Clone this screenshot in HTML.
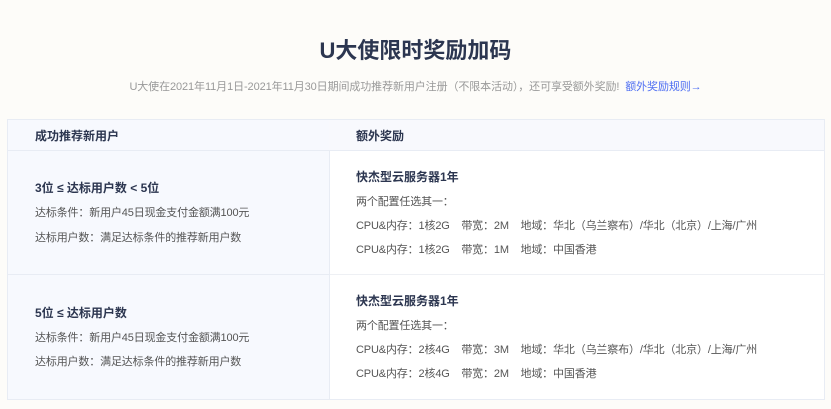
<!DOCTYPE html><html><head><meta charset="utf-8"><style>
body{margin:0;width:831px;height:409px;background:#fdfcf9;font-family:"Liberation Sans","Noto Sans CJK SC",sans-serif;position:relative;overflow:hidden;color:#333}
.a{position:absolute;white-space:nowrap}
h1{position:absolute;top:33px;left:0;width:831px;text-align:center;margin:0;font-size:22px;color:#2c3650;font-weight:bold}
.sub{top:78px;left:0;width:831px;text-align:center;font-size:11px;color:#999;letter-spacing:-0.1px}
.sub span{color:#4e6ef2}
.tbl{position:absolute;left:7px;top:119px;width:816px;height:279px;border:1px solid #e8ecf4;background:#fff}
.l{position:absolute;left:0;width:321px;background:#f7f9fe;border-right:1px solid #e8ecf4}
.hd{font-size:12px;font-weight:bold;color:#2c3650}
.b{font-size:12px;font-weight:bold;color:#2c3650}
.t{font-size:11px;color:#555;letter-spacing:-0.15px}
</style></head><body>
<h1>U大使限时奖励加码</h1>
<div class="a sub">U大使在2021年11月1日-2021年11月30日期间成功推荐新用户注册（不限本活动），还可享受额外奖励! &nbsp;<span>额外奖励规则→</span></div>
<div class="tbl">
<div class="l" style="top:0;height:30px;border-bottom:1px solid #e8ecf4"></div>
<div style="position:absolute;left:321px;right:0;top:0;height:30px;background:#f8f9fd;border-bottom:1px solid #e8ecf4"></div>
<div class="l" style="top:31px;height:123px;border-bottom:1px solid #e8ecf4"></div>
<div class="l" style="top:155px;height:124px"></div>
<div style="position:absolute;left:322px;right:0;top:154px;border-top:1px solid #eef0f4"></div>
</div>
<div class="a hd" style="left:35px;top:127px">成功推荐新用户</div>
<div class="a hd" style="left:356px;top:127px">额外奖励</div>
<div class="a b" style="left:35px;top:179px">3位 ≤ 达标用户数 &lt; 5位</div>
<div class="a t" style="left:35px;top:204px">达标条件：新用户45日现金支付金额满100元</div>
<div class="a t" style="left:35px;top:229px">达标用户数：满足达标条件的推荐新用户数</div>
<div class="a b" style="left:356px;top:168px">快杰型云服务器1年</div>
<div class="a t" style="left:356px;top:193px">两个配置任选其一：</div>
<div class="a t" style="left:356px;top:217px">CPU&amp;内存：1核2G &nbsp;&nbsp; 带宽：2M &nbsp;&nbsp; 地域：华北（乌兰察布）/华北（北京）/上海/广州</div>
<div class="a t" style="left:356px;top:241px">CPU&amp;内存：1核2G &nbsp;&nbsp; 带宽：1M &nbsp;&nbsp; 地域：中国香港</div>
<div class="a b" style="left:35px;top:304px">5位 ≤ 达标用户数</div>
<div class="a t" style="left:35px;top:329px">达标条件：新用户45日现金支付金额满100元</div>
<div class="a t" style="left:35px;top:353px">达标用户数：满足达标条件的推荐新用户数</div>
<div class="a b" style="left:356px;top:292px">快杰型云服务器1年</div>
<div class="a t" style="left:356px;top:317px">两个配置任选其一：</div>
<div class="a t" style="left:356px;top:341px">CPU&amp;内存：2核4G &nbsp;&nbsp; 带宽：3M &nbsp;&nbsp; 地域：华北（乌兰察布）/华北（北京）/上海/广州</div>
<div class="a t" style="left:356px;top:365px">CPU&amp;内存：2核4G &nbsp;&nbsp; 带宽：2M &nbsp;&nbsp; 地域：中国香港</div>
</body></html>
